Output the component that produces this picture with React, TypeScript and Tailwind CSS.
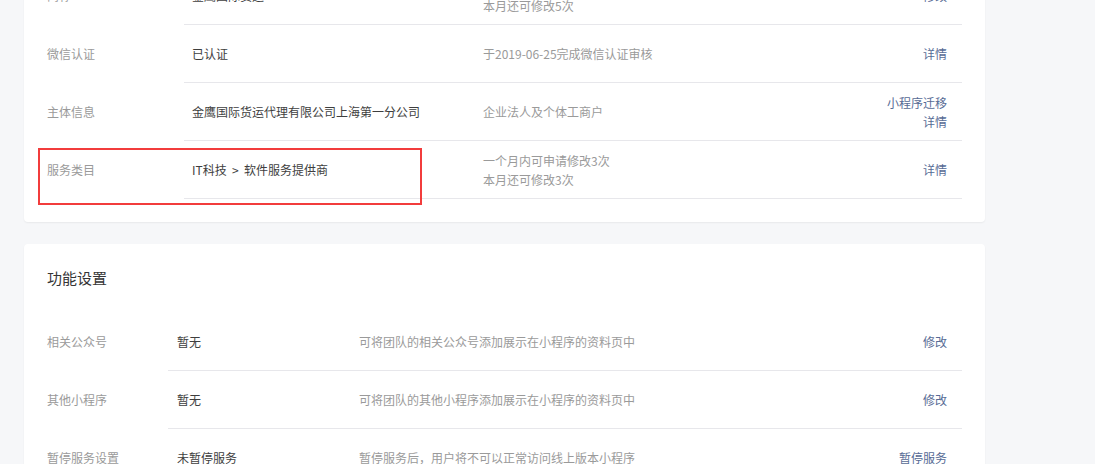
import React from 'react';

interface InfoRow {
  label: string;
  value: string;
  desc: string[];
  actions: string[];
}

const basicRows: InfoRow[] = [
  { label: '简称', value: '金鹰国际货运', desc: ['一年内可申请修改5次', '本月还可修改5次'], actions: ['修改'] },
  { label: '微信认证', value: '已认证', desc: ['于2019-06-25完成微信认证审核'], actions: ['详情'] },
  { label: '主体信息', value: '金鹰国际货运代理有限公司上海第一分公司', desc: ['企业法人及个体工商户'], actions: ['小程序迁移', '详情'] },
  { label: '服务类目', value: 'IT科技\u00a0\u00a0>\u00a0\u00a0软件服务提供商', desc: ['一个月内可申请修改3次', '本月还可修改3次'], actions: ['详情'] },
];

const featureRows: InfoRow[] = [
  { label: '相关公众号', value: '暂无', desc: ['可将团队的相关公众号添加展示在小程序的资料页中'], actions: ['修改'] },
  { label: '其他小程序', value: '暂无', desc: ['可将团队的其他小程序添加展示在小程序的资料页中'], actions: ['修改'] },
  { label: '暂停服务设置', value: '未暂停服务', desc: ['暂停服务后，用户将不可以正常访问线上版本小程序'], actions: ['暂停服务'] },
];

const Row: React.FC<{ row: InfoRow; labelW: string; valueW: string; pad: string }> = ({ row, labelW, valueW, pad }) => (
  <div className="flex h-[58px]">
    <div className={`${labelW} shrink-0 flex items-center text-[12px] text-[#9a9a9a]`}>{row.label}</div>
    <div className={`flex-1 flex items-center border-b border-[#e7e7eb] ${pad} pr-[15px]`}>
      <div className={`${valueW} shrink-0 text-[12px] text-[#3e3e3e]`}>{row.value}</div>
      <div className="flex-1 text-[12px] leading-[19px] text-[#9a9a9a]">
        {row.desc.map((d) => (
          <div key={d}>{d}</div>
        ))}
      </div>
      <div className="flex flex-col items-end text-[12px] leading-[19px] text-[#576b95]">
        {row.actions.map((a) => (
          <a key={a} className="cursor-pointer">{a}</a>
        ))}
      </div>
    </div>
  </div>
);

export default function App() {
  return (
    <div
      className="min-h-screen bg-[#f6f7f9] pl-[24px] overflow-hidden"
      style={{ fontFamily: '"Noto Sans CJK SC", "Noto Sans", sans-serif' }}
    >
      <div className="w-[961px] mt-[-33px] bg-white rounded-[4px] shadow-[0_1px_2px_rgba(0,0,0,0.06)] px-[23px] pb-[23px] relative">
        {basicRows.map((r) => (
          <Row key={r.label} row={r} labelW="w-[137px]" valueW="w-[291px]" pad="pl-[8px]" />
        ))}
        {/* annotation box around 服务类目 */}
        <div className="absolute left-[14px] top-[181px] w-[384px] h-[57px] border-2 border-[#f23c3c] pointer-events-none" />
      </div>

      <div className="w-[961px] mt-[22px] bg-white rounded-[4px] shadow-[0_1px_2px_rgba(0,0,0,0.06)] px-[23px] pb-[24px]">
        <div className="h-[69px] flex items-center text-[15px] text-[#353535]">功能设置</div>
        {featureRows.map((r) => (
          <Row key={r.label} row={r} labelW="w-[121px]" valueW="w-[182px]" pad="pl-[9px]" />
        ))}
      </div>
    </div>
  );
}
